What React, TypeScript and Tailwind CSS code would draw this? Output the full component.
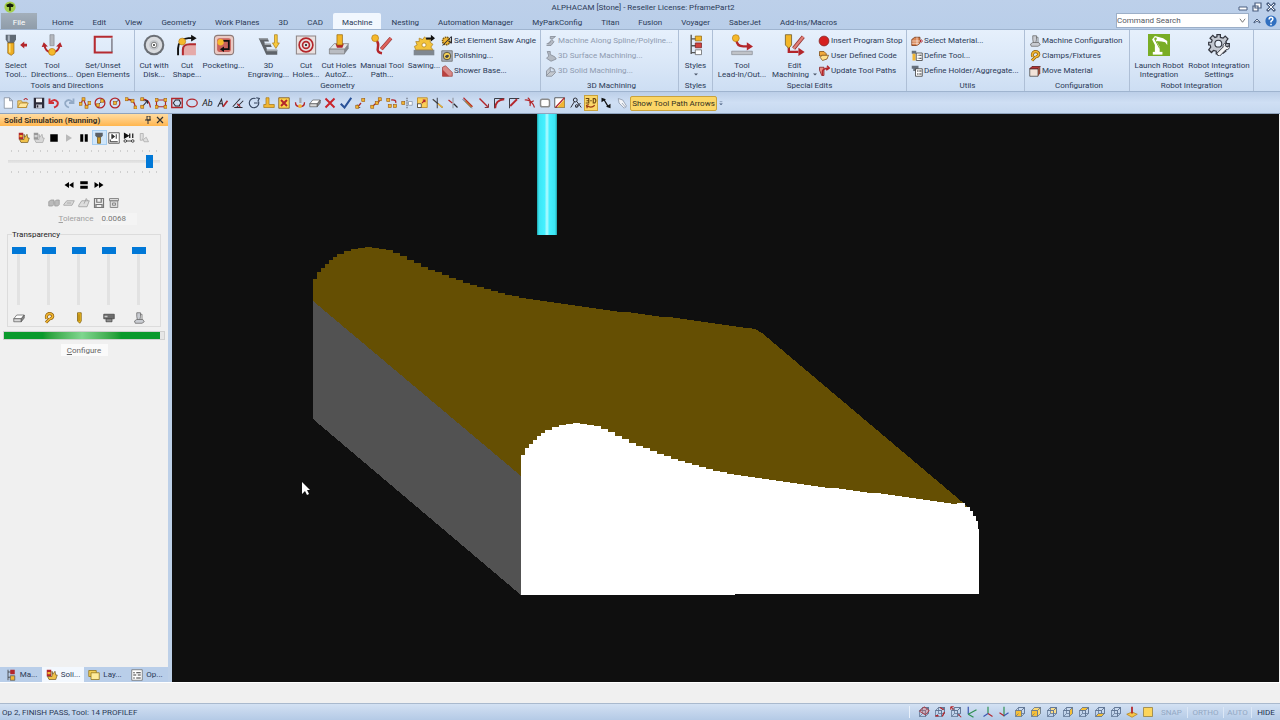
import type { ReactNode } from 'react';
import clsx from 'clsx';

const RED = '#b3262b';
const GOLD = '#f2b632';
const INK = '#2b2b33';

/* ---------- 16px glyphs ---------- */

const node = (x: number, y: number) => (
  <rect x={x - 2} y={y - 2} width="4" height="4" fill={GOLD} stroke="#9a5a10" strokeWidth=".8" />
);

const cube = (front = 'none', top = 'none', side = 'none', left = 'none') => (
  <g stroke="#5d7391" strokeWidth="1">
    <path d="M6 2h8v8H6z" fill={left} />
    <path d="M2 6l4-4h8l-4 4z" fill={top} />
    <path d="M10 6l4-4v8l-4 4z" fill={side} />
    <path d="M2 6h8v8H2z" fill={front} />
    <path d="M2 14l4-4" />
  </g>
);

const slab = (
  <g stroke="#555" strokeWidth=".9">
    <path d="M1 9l4-5h10l-4 5z" fill="#fff" />
    <path d="M1 9h10v4H1z" fill="#d8d8d8" />
    <path d="M11 9l4-5v4l-4 5z" fill="#888" />
  </g>
);

const machine = (
  <g stroke="#666" strokeWidth="1" fill="#c9ccd2">
    <path d="M5 1h5v5l-1 5H6L5 6z" />
    <path d="M2 12l3-2h8l2 3-3 2H3z" />
    <path d="M10 3h2v7" fill="none" />
  </g>
);

const clamp = (
  <g fill="none">
    <path d="M4 14l5-5M5 9q-2-5 3-7 5 0 5 4-1 3-4 3" stroke="#8c6012" strokeWidth="4" />
    <path d="M4 14l5-5M5 9q-2-5 3-7 5 0 5 4-1 3-4 3" stroke={GOLD} strokeWidth="2.2" />
  </g>
);

const simStart = (
  <g>
    <path d="M1 1h6v9H1z" fill={RED} />
    <path d="M2 4h4v3H2z" fill={GOLD} />
    <path d="M8 3l1 4 3-4 1 5h2l-2 6H4l-2-4h6z" fill="#f0c14a" stroke="#6b511b" strokeWidth=".9" />
  </g>
);

const glyphs: Record<string, ReactNode> = {
  new: <path d="M3 1h7l4 4v10H3zM10 1v4h4" fill="#fff" stroke="#7d8796" />,
  open: (
    <g stroke="#a8781a" strokeWidth=".9">
      <path d="M1 14V5h5l1 2h6v7z" fill="#f5d274" />
      <path d="M1 14l3-6h11l-3 6z" fill="#ffe69a" />
      <path d="M9 4q3-4 5 0" fill="none" stroke={RED} strokeWidth="1.5" />
    </g>
  ),
  save: (
    <g>
      <path d="M1 1h14v14H1z" fill="#2c2c3a" />
      <path d="M4 2h8v5H4z" fill="#f4f4f8" />
      <path d="M4 10h8v5H4z" fill="#c9cbd6" />
      <path d="M5 11h2v3H5z" fill="#2c2c3a" />
    </g>
  ),
  undo: <path d="M2 2v6h6M3 7q6-6 10 0 1 5-5 7" fill="none" stroke="#cf3036" strokeWidth="2.6" />,
  redo: <path d="M14 2v6H8M13 7q-6-6-10 0-1 5 5 7" fill="none" stroke="#93aac6" strokeWidth="2.4" />,
  polyline: (
    <g>
      <path d="M2 9l4-6 4 10 4-5" fill="none" stroke={RED} strokeWidth="1.6" />
      {node(2, 9)}{node(6, 3)}{node(10, 13)}{node(14, 8)}
    </g>
  ),
  circleDiag: (
    <g>
      <circle cx="8" cy="8" r="6.5" fill="none" stroke={RED} strokeWidth="1.7" />
      <path d="M4 12l8-8" stroke={INK} />{node(11, 5)}{node(5, 11)}
    </g>
  ),
  circleCenter: (
    <g>
      <circle cx="8" cy="8" r="6.5" fill="none" stroke={RED} strokeWidth="1.7" />
      <path d="M8 8l5-4" stroke={INK} />{node(8, 8)}
    </g>
  ),
  arc: (
    <g>
      <path d="M2 3q11 0 12 11" fill="none" stroke={RED} strokeWidth="1.7" />
      {node(2, 3)}{node(10, 5)}{node(14, 14)}
    </g>
  ),
  arcArrow: (
    <g>
      <path d="M3 3q10 0 11 11" fill="none" stroke={RED} strokeWidth="1.7" />
      <path d="M2 14l8-9M6 5h4v4" fill="none" stroke={INK} strokeWidth="1.5" />{node(3, 13)}{node(3, 3)}
    </g>
  ),
  rect: (
    <g>
      <path d="M2 4h12v9H2z" fill="none" stroke={RED} strokeWidth="1.6" />
      {node(2, 4)}{node(14, 4)}{node(2, 13)}{node(14, 13)}
    </g>
  ),
  rectCircle: (
    <g fill="none">
      <path d="M1 2h14v12H1z" stroke={RED} strokeWidth="1.8" />
      <path d="M3 8l3-4h5l2 4-2 4H6z" stroke={INK} strokeWidth="1.4" />
    </g>
  ),
  ellipse: <ellipse cx="8" cy="8" rx="7" ry="5.2" fill="none" stroke={RED} strokeWidth="1.7" />,
  textEdit: (
    <g fill="none">
      <path d="M1 13l5-10 2 10M3 9h4" stroke={INK} strokeWidth="1.4" />
      <path d="M8 13l6-8" stroke={RED} strokeWidth="2.2" />
    </g>
  ),
  parallel: (
    <g fill="none">
      <path d="M1 13L11 2M6 14l9-9M3 14h11" stroke={INK} strokeWidth="1.4" />
      <path d="M7 9l4 4" stroke={RED} strokeWidth="1.8" />
    </g>
  ),
  circleArrow: (
    <g fill="none" stroke="#34435c" strokeWidth="1.5">
      <path d="M14 6a6.3 6.3 0 1 1-4-4" />
      <path d="M8 8h5M11 1l4 1-2 4" />
    </g>
  ),
  ruler: <path d="M4 1h4v9h7v4H1v-4h3z" fill={GOLD} stroke="#a87b1c" />,
  boxX: (
    <g>
      <path d="M1 1h14v14H1z" fill="#fcd44b" stroke="#7a4c10" />
      <path d="M4 4l8 8M12 4l-8 8" stroke={RED} strokeWidth="2.6" />
    </g>
  ),
  directions: (
    <g>
      <path d="M7 1h3v7H7z" fill="#a5a8b0" />
      <path d="M2 7q0 6 6 6t6-6" fill="none" stroke={RED} strokeWidth="1.8" />
      <circle cx="8" cy="12" r="2.5" fill={GOLD} />
    </g>
  ),
  slab,
  cross: <path d="M2 2l12 12M14 2L2 14" stroke="#c9242b" strokeWidth="2.6" />,
  tick: <path d="M1 9l5 5 9-13" fill="none" stroke="#2a5298" strokeWidth="2.8" />,
  moveNode: (
    <g>
      <path d="M3 14l5-6" stroke={RED} strokeWidth="1.7" />
      <path d="M3 10v4h4" fill="none" stroke={INK} />{node(11, 4)}{node(3, 13)}
    </g>
  ),
  stretch: (
    <g>
      <path d="M2 14l5-5h3l4-6" fill="none" stroke={RED} strokeWidth="1.6" />
      {node(3, 13)}{node(9, 8)}{node(13, 3)}
    </g>
  ),
  copy: (
    <g>
      <path d="M7 4q7-1 6 4" fill="none" stroke={RED} strokeWidth="1.7" />
      {node(3, 4)}{node(5, 12)}{node(12, 12)}
    </g>
  ),
  mirror: (
    <g>
      <path d="M8 1v14" stroke={INK} strokeDasharray="2 1" />
      <path d="M10 6h5v5h-5z" fill="#fff" stroke="#8292a8" />{node(3, 8)}
    </g>
  ),
  scale: (
    <g>
      <path d="M2 1h13v13H2z" fill="#fbd057" stroke="#b5801b" />
      <path d="M2 9h5v5H2z" fill="#fff" stroke="#333" />
      <path d="M8 8l4-4M9 4h3v3" fill="none" stroke={RED} strokeWidth="1.5" />
    </g>
  ),
  trim: (
    <g>
      <path d="M1 3l13 11" stroke="#444" strokeWidth="1.7" />
      <path d="M7 1v14" stroke={INK} strokeWidth="1.2" />
      <path d="M8 9l6 5" stroke={GOLD} strokeWidth="2" />
    </g>
  ),
  breakLine: (
    <g>
      <path d="M8 1v14" stroke="#777" />
      <path d="M2 4l5 4" stroke={RED} strokeWidth="1.6" />
      <path d="M9 9l5 5" stroke={INK} strokeWidth="1.6" />
    </g>
  ),
  extend: (
    <g>
      <path d="M5 5l8 8" stroke={GOLD} strokeWidth="3" />
      <path d="M2 1l12 12" stroke={RED} strokeWidth="1.5" />
      <path d="M1 3l12 12" stroke={INK} />
    </g>
  ),
  join: (
    <g>
      <path d="M2 2l11 11" stroke={RED} strokeWidth="1.8" />
      <path d="M14 9v5H9" fill="none" stroke="#7d2428" strokeWidth="1.2" />
    </g>
  ),
  fillet: (
    <g fill="none">
      <path d="M2 15V2h13" stroke={INK} strokeWidth="1.2" />
      <path d="M3 15Q3 4 15 3" stroke={RED} strokeWidth="2.4" />
    </g>
  ),
  chamfer: (
    <g fill="none">
      <path d="M2 15V2h13" stroke={INK} strokeWidth="1.2" />
      <path d="M3 12l9-9" stroke={RED} strokeWidth="2.4" />
    </g>
  ),
  arcs: <path d="M1 4q9-1 13 10M5 1q5 3 3 11M7 8l6-3" fill="none" stroke={RED} strokeWidth="1.6" />,
  pocket: <rect x="2" y="3" width="12" height="10" rx="2.5" fill="#fff" stroke="#8b8b8b" strokeWidth="2" />,
  split: (
    <g>
      <path d="M1 1h13v13H1z" fill="#fff" stroke="#333" />
      <path d="M14 3v11H4z" fill={GOLD} />
      <path d="M2 14L14 1" stroke={RED} strokeWidth="1.6" />
    </g>
  ),
  inspect: (
    <g fill="none" stroke={INK} strokeWidth="1.3">
      <circle cx="7" cy="4" r="2.6" />
      <path d="M1 14l5-8M9 6l6 8M14 8l-6 6" />
      <circle cx="9" cy="12" r="1.8" />
    </g>
  ),
  threeD: (
    <g fill="none" stroke="#6c4710" strokeWidth="1.5">
      <path d="M1 2h4v6H1M2 5h3M7 5h2M11 2h2q3 3 0 6h-2z" />
      <path d="M2 11q6 5 11 0M5 10l-3 1 1 4" stroke="#9c3a12" />
    </g>
  ),
  arrows: (
    <g fill="#111">
      <path d="M5 3l6 10" stroke="#111" strokeWidth="1.8" />
      <path d="M2 7V1l6 2zM14 9v6l-6-2z" />
    </g>
  ),
  pen: <path d="M3 2l6 2 5 8-3 3-7-7zM8 8l5 6" fill="#f2f4f8" stroke="#8793a5" />,

  // ribbon, small rows
  sawAngle: (
    <g>
      <circle cx="7" cy="8" r="5" fill={GOLD} stroke="#7b5b13" strokeDasharray="2 1" strokeWidth="2" />
      <path d="M2 14L14 2M14 2v9M10 8l4 3" stroke={INK} strokeWidth="1.4" fill="none" />
    </g>
  ),
  polishing: (
    <g>
      <path d="M1 1h14v14H1z" fill="#aab0ba" stroke="#666" />
      <circle cx="8" cy="8" r="5" fill="#f6d257" stroke="#333" />
      <path d="M5 9q3-5 6-1l-3 3z" fill="#444" />
    </g>
  ),
  shower: (
    <g>
      <path d="M2 15V3l4-2 9 9v5z" fill="#d98a88" stroke="#98403f" />
      <path d="M2 15V6l9 9z" fill="#b9403f" />
    </g>
  ),
  spline: <path d="M2 14h6l4-5-3-3 5-4H7v3h3M2 12q5 0 6-5" fill="#b4bac3" stroke="#7f8691" />,
  surface: <path d="M3 2h4v4l6 3 2 3-7 3-6-4 3-3z" fill="#b4bac3" stroke="#7f8691" />,
  solid: <path d="M2 8l5-5 5 2 2 5-5 5H2zM7 3v6h6M7 9l-5 5" fill="#c4c9d0" stroke="#7f8691" />,
  stop: <circle cx="8" cy="8" r="6.5" fill="#d6201f" stroke="#8b2a2a" strokeWidth="1.2" />,
  userCode: (
    <g stroke="#7b4a12">
      <path d="M2 2h6l3 3v3H2z" fill="#f0a93c" />
      <path d="M5 7h9l-2 5-6 2-3-4z" fill="#ffe08a" />
    </g>
  ),
  update: (
    <g>
      <path d="M2 3h6v11H5L2 7z" fill="#e88c85" stroke="#7c1d20" />
      <path d="M6 14V9q0-4 8-5M12 1l3 3-4 3" stroke={RED} strokeWidth="2" fill="none" />
    </g>
  ),
  material: (
    <g>
      <path d="M1 6l4-3h7v8l-4 3H1z" fill="#d98453" stroke="#71310f" />
      <path d="M1 8h11M1 11h10M8 3v11" stroke="#fff" strokeWidth=".8" />
      <path d="M12 8h4M12 8l2-2M12 8l2 2" stroke={RED} strokeWidth="1.3" />
    </g>
  ),
  defTool: (
    <g>
      <path d="M1 1h6v4H1z" fill="#66707d" />
      <path d="M2 5h4v9H2z" fill={GOLD} />
      <path d="M7 4h8v10H7z" fill="#fff" stroke="#333" />
      <path d="M9 7h1M11 7h3M9 11h1M11 11h3" stroke="#333" strokeWidth="1.4" />
    </g>
  ),
  defHolder: (
    <g>
      <path d="M1 1h9v4H8v3H3V5H1z" fill="#66707d" />
      <path d="M6 5h9v10H6z" fill="#fff" stroke="#333" />
      <path d="M8 8h2M11 8h3M8 12h2M11 12h3" stroke="#333" strokeWidth="1.4" />
    </g>
  ),
  machine,
  clamp,
  moveMaterial: (
    <g>
      <path d="M1 5h11v10H1z" fill="#f2e3d9" stroke="#444" />
      <path d="M1 5l3-3h11l-3 3z" fill="#b83535" stroke="#571717" />
      <path d="M12 5l3-3v9l-3 4z" fill="#8d4a3a" />
    </g>
  ),

  // solid simulation panel
  simStart,
  simGrey: <g className="opacity-50 grayscale">{simStart}</g>,
  stopSq: <path d="M3 3h10v10H3z" fill="#000" />,
  play: <path d="M4 3l8 5-8 5z" fill="#b9b9b9" />,
  pause: <path d="M3 3h4v10H3zM9 3h4v10H9z" fill="#000" />,
  simTool: (
    <g>
      <path d="M3 1h10v4l-2 2H5L3 5z" fill="#5a6068" />
      <path d="M6 7h4v8H6z" fill="#cf9b28" stroke="#71551a" />
    </g>
  ),
  playBox: (
    <g fill="none" stroke="#333">
      <path d="M1 1h14v14H1z" fill="#fff" />
      <path d="M5 3l4 3-4 3z" fill="#333" />
      <path d="M11 3v6M3 10v3h10" strokeWidth="1.3" />
    </g>
  ),
  playSteps: (
    <g fill="#111" stroke="#111">
      <path d="M2 2l5 3-5 3zM9 2v6M13 2v6" strokeWidth="1.6" />
      <path d="M4 12h8" />
      <circle cx="3" cy="12" r="1.7" fill="#fff" />
      <circle cx="13" cy="12" r="1.7" fill="#fff" />
    </g>
  ),
  greyMachine: <path d="M3 2h4v5l-1 4H3zM7 10l4-3 3 6H8z" fill="#e0e0e0" stroke="#aaa" />,
  rewind: <path d="M8 4v8L2 8zM14 4v8L8 8z" fill="#000" />,
  equals: <path d="M3 3h10v4H3zM3 9h10v4H3z" fill="#000" />,
  forward: <path d="M2 4v8l6-4zM8 4v8l6-4z" fill="#000" />,
  parts: <path d="M1 6l3-2h4v6l-2 2H1zM9 6l2-2h4v6l-2 2H9z" fill="#bbb" stroke="#999" />,
  part: <path d="M1 10l4-5h10l-3 6H1zM5 8h6" fill="#ddd" stroke="#999" />,
  partUp: <path d="M1 11l4-6h10l-3 8H1zM8 9l3-7 2 3" fill="#ddd" stroke="#999" />,
  greySave: <path d="M2 2h12v12H2zM5 2v5h6V2M4 14v-4h8v4" fill="#eee" stroke="#777" strokeWidth="1.6" />,
  greyBox: <path d="M2 2h12v3H2zM3 5h10v9H3zM6 8h4v3H6z" fill="#ddd" stroke="#888" strokeWidth="1.3" />,
  cutter: <path d="M6 1h5v11l-2 3-3-3zM8 3v9" fill="#f0b91f" stroke="#7b5b0c" />,
  holder: (
    <g stroke="#444">
      <path d="M1 3h14v6H1z" fill="#6d6d6d" />
      <path d="M2 5h4v2H2z" fill="#ccc" stroke="none" />
      <path d="M4 9h8v4H4z" fill="#8c8c8c" />
    </g>
  ),

  // pane tabs
  manager: (
    <g>
      <path d="M4 1v14M4 4h5M4 11h5" stroke="#333" fill="none" />
      <path d="M7 1h6v6H7z" fill={RED} />
      <path d="M7 9h6v6H7z" fill={GOLD} stroke="#555" />
    </g>
  ),
  layers: (
    <g stroke="#8f7216">
      <path d="M1 2h10v8H1z" fill="#f4cf56" />
      <path d="M4 5h11v9H4z" fill="#ffec9c" />
    </g>
  ),
  ops: (
    <g>
      <path d="M1 1h14v14H1z" fill="#fff" stroke="#666" />
      <path d="M3 5h2M7 5h6M3 8h4M9 8h4M3 12h2M7 12h6" stroke="#333" strokeWidth="1.3" />
    </g>
  ),

  // status bar views
  viewBall: <g>{cube()}<path d="M2 7l6-6 7 5-5 6z" fill="#cf6f74" fillOpacity=".4" stroke={RED} /></g>,
  viewSpin: <g>{cube()}<path d="M8 2l5 3M14 8l-3 6M2 13h4" stroke={RED} strokeWidth="1.8" /></g>,
  viewCorner: <g>{cube()}<path d="M1 1l4 4M1 1v4M1 1h4M15 15l-4-4" stroke={RED} strokeWidth="1.4" /></g>,
  axisA: (
    <g fill="none" strokeWidth="1.6">
      <path d="M3 1v10" stroke="#3a56b0" /><path d="M3 11l11-6" stroke="#2f8f52" /><path d="M3 11l7 4" stroke="#2f8f52" />
    </g>
  ),
  axisB: (
    <g fill="none" strokeWidth="1.6">
      <path d="M8 1v9" stroke="#2f8f52" /><path d="M8 10l-6 4" stroke="#3a56b0" /><path d="M8 10l6 4" stroke={RED} />
    </g>
  ),
  axisC: (
    <g fill="none" strokeWidth="1.6">
      <path d="M8 1v13" stroke="#2f8f52" /><path d="M8 13l-6-4" stroke={RED} /><path d="M8 13l6-4" stroke="#3a56b0" />
    </g>
  ),
  vFront: cube('#f6bf36'),
  vTop: cube('#f6bf36', '#fbd873', '#fbd873'),
  vLeft: cube('none', 'none', 'none', '#f9dc8a'),
  vRight: cube('none', 'none', '#f6bf36'),
  vBack: cube('none', '#f6bf36'),
  vBottom: <g>{cube()}<path d="M2 14l4-4h8l-4 4z" fill="#f6bf36" stroke="#5d7391" /></g>,
  vWire: cube(),
  workPlane: (
    <g>
      <path d="M1 11l7-3 7 3-7 4z" fill="#f6c64a" stroke="#b38119" />
      <path d="M8 1v9" stroke={RED} strokeWidth="2.4" />
    </g>
  ),
  flat: <path d="M2 2h12v12H2z" fill="#fcd55c" stroke="#8f7a3a" />,
};

function Glyph({ name, className = 'size-3' }: { name: string; className?: string }) {
  return (
    <svg viewBox="0 0 16 16" className={clsx('shrink-0', className)} aria-hidden="true">
      {glyphs[name]}
    </svg>
  );
}

/* ---------- 32px ribbon art ---------- */

const pictures: Record<string, ReactNode> = {
  selectTool: (
    <g>
      <path d="M1 1h15v7l-3 5H4L1 8z" fill="#5f6974" />
      <path d="M4 2h3v9H4z" fill="#a9b2bd" />
      <path d="M4 13h9v15l-4 3-5-3z" fill="#efae22" stroke="#8f6414" />
      <path d="M6 14h2v13H6z" fill="#ffe27c" />
      <path d="M22 16l6-5v3h4v4h-4v3z" fill="#b3262b" />
    </g>
  ),
  toolDirections: (
    <g>
      <path d="M13 1h6v16h-6z" fill="#b4b7bd" stroke="#868a93" />
      <path d="M5 16q1 10 11 11 10-1 11-11" fill="none" stroke={RED} strokeWidth="3" />
      <path d="M1 19l3-7 6 6zM31 19l-3-7-6 6z" fill={RED} />
      <circle cx="16" cy="26" r="5" fill="#f5b92c" stroke="#b57b14" />
    </g>
  ),
  openElements: (
    <g fill="none">
      <path d="M30 4H4v23h26" stroke="#b52b31" strokeWidth="3" />
      <path d="M29 6v20" stroke="#5c5560" strokeWidth="1.6" />
    </g>
  ),
  disk: (
    <g>
      <circle cx="16" cy="16" r="15" fill="#6b6f75" />
      <circle cx="16" cy="16" r="12" fill="#d9dbde" />
      <circle cx="16" cy="16" r="7" fill="#c0c3c8" />
      <circle cx="16" cy="16" r="4" fill="#fff" stroke="#555" />
      <circle cx="16" cy="16" r="1.5" fill="#333" />
    </g>
  ),
  cutShape: (
    <g fill="none">
      <path d="M11 31v-7q0-8 9-8h9v15z" fill="#e5aaa9" />
      <path d="M10 31v-8q0-8 10-8h9" stroke="#b22a2e" strokeWidth="3" />
      <path d="M3 31V21Q4 7 18 6h6" stroke="#111" strokeWidth="2.8" />
      <path d="M22 1l8 5-8 5z" fill="#111" />
      <circle cx="9" cy="11" r="5" fill="#f5b92c" stroke="#b57b14" />
    </g>
  ),
  pocketing: (
    <g>
      <rect x="2" y="2" width="28" height="28" rx="5" fill="#e9c9c3" stroke="#8e7b78" strokeWidth="1.5" />
      <rect x="6" y="6" width="20" height="20" rx="3" fill="#c9625b" />
      <path d="M14 10h9v12h-8" fill="none" stroke="#111" strokeWidth="2.6" />
      <path d="M16 18v8l-6-4z" fill="#111" />
      <circle cx="11" cy="12" r="4.6" fill="#f5b92c" />
    </g>
  ),
  engraving: (
    <g>
      <path d="M1 6h13l2 5H9l1 3h8l2 5h-8l1 4h15v7H12z" fill="#5e6369" />
      <path d="M1 6h13l1 2H3zM9 14h9l1 2h-9zM12 23h16v2H13z" fill="#a3a8ad" />
      <path d="M24 1h4v12h3l-5 8-5-8h3z" fill="#f7c93c" stroke="#a97b16" />
    </g>
  ),
  cutHoles: (
    <g fill="none">
      <path d="M2 3h28v26H2z" fill="#e9e0df" stroke="#8d8485" strokeWidth="1.5" />
      <circle cx="16" cy="16" r="10" stroke="#b3262b" strokeWidth="2.4" />
      <circle cx="16" cy="16" r="5" stroke="#b3262b" strokeWidth="2.4" />
      <circle cx="16" cy="16" r="1.5" fill="#111" />
    </g>
  ),
  autoZ: (
    <g>
      <path d="M2 22l7-8h21l-6 8z" fill="#e4e6e9" stroke="#777" />
      <path d="M2 22h22v7H2z" fill="#b9bcc2" stroke="#777" />
      <path d="M24 22l6-8v7l-6 8z" fill="#82868d" />
      <path d="M11 14h12l-2 6h-8z" fill={RED} />
      <path d="M13 1h8v15h-8z" fill="#f3b627" stroke="#93670f" />
    </g>
  ),
  manualPath: (
    <g fill="none">
      <path d="M6 6q6 7 4 14t6 8" stroke={RED} strokeWidth="3.6" />
      <path d="M15 22L29 6" stroke="#8f2d2e" strokeWidth="5.4" />
      <path d="M15 22L29 6" stroke="#dd625c" strokeWidth="3.4" />
      <circle cx="6" cy="6" r="5" fill="#f5b92c" stroke="#b57b14" />
    </g>
  ),
  sawing: (
    <g>
      <path d="M1 23h30v8H1z" fill="#7f8790" />
      <path d="M4 23l-2-5 4-2-2-5 5 0 0-5 5 2 3-4 3 4 5-1v5l4 3-3 4 3 4z" fill="#f3c33b" stroke="#a77b18" />
      <circle cx="16" cy="16" r="3" fill="#fff" stroke="#a77b18" />
      <path d="M19 5h7V1l6 5-6 5V8h-7z" fill="#111" />
    </g>
  ),
  styles: (
    <g>
      <path d="M9 1v28M9 7h8M9 17h8M9 27h8" fill="none" stroke="#555" strokeWidth="2" />
      <path d="M15 3h9v7h-9z" fill="#f3b627" stroke="#8b6312" />
      <path d="M15 13h9v7h-9z" fill="#d0413d" stroke="#711c1d" />
      <path d="M15 23h9v7h-9z" fill="#fff" stroke="#555" />
    </g>
  ),
  leadIn: (
    <g>
      <path d="M1 25h30v5H1z" fill="#c0c3c8" stroke="#868a91" />
      <path d="M8 8q0 10 10 10h6" fill="none" stroke={RED} strokeWidth="3.4" />
      <path d="M23 12l9 6-9 6z" fill={RED} />
      <circle cx="7" cy="6" r="5" fill="#f5b92c" stroke="#b57b14" />
    </g>
  ),
  editMachining: (
    <g fill="none">
      <path d="M7 14v12h14" stroke={RED} strokeWidth="3.4" />
      <path d="M21 20l9 6-9 6z" fill={RED} />
      <path d="M14 21L28 4" stroke="#8f2d2e" strokeWidth="5.6" />
      <path d="M14 21L28 4" stroke="#e08078" strokeWidth="3.4" />
      <path d="M2 1h9v15l-4 5-5-5z" fill="#f3b627" stroke="#5d4a1a" />
    </g>
  ),
  robot: (
    <g>
      <path d="M0 0h32v32H0z" fill="#79ad25" />
      <path d="M7 26h14v4H7z" fill="#fff" />
      <path d="M10 26V16L6 8l4-5 12 3 6 4v6l-3-4-5-1-8-1 5 9v7z" fill="#fff" />
      <path d="M10 8l7 13" stroke="#79ad25" strokeWidth="1.4" />
      <circle cx="11" cy="7" r="1.8" fill="#79ad25" />
    </g>
  ),
  robotSettings: (
    <g>
      <path
        d="M13 1h5v4l4 1 3-3 4 4-3 4 1 3h4v4h-5l-2 4 2 3-4 3-3-3-2 1v3h-5v-4l-4-1-3 3-4-4 3-4-1-3H1v-4h4l1-3-3-3 4-4 3 3 3-1z"
        fill="#c3c8d1" stroke="#33363f" strokeWidth="1.8" />
      <circle cx="15" cy="14" r="5" fill="#eaf2fc" stroke="#33363f" strokeWidth="1.6" />
      <path d="M13 28l9-9q-1-5 4-6l-1 4 3 2 3-2q1 6-5 6l-9 9q-4 0-4-4z" fill="#f3f4f6" stroke="#33363f" strokeWidth="1.4" />
    </g>
  ),
};

/* ---------- ribbon ---------- */

type BigProps = { picture: string; lines: string[]; width: string; menu?: boolean };

function BigButton({ picture, lines, width, menu }: BigProps) {
  return (
    <button className={clsx('flex flex-col items-center pt-1 shrink-0', width)}>
      <svg viewBox="0 0 32 32" className="size-[22px] mb-[5px]" aria-hidden="true">
        {pictures[picture]}
      </svg>
      {lines.map((line, i) => (
        <span key={line} className="flex items-center gap-1">
          {line}
          {menu && i === lines.length - 1 && <Caret />}
        </span>
      ))}
    </button>
  );
}

function Caret() {
  return (
    <svg viewBox="0 0 8 4" className="w-1 h-[9px]" aria-hidden="true">
      <path d="M0 0h8L4 4z" fill="#4a5568" />
    </svg>
  );
}

function RowButtons({ rows, disabled }: { rows: [string, string][]; disabled?: boolean }) {
  return (
    <div className="flex flex-col pt-[3px]">
      {rows.map(([icon, label]) => (
        <button
          key={label}
          disabled={disabled}
          className="flex items-center gap-px h-[15px] text-left disabled:text-[#8f9bb0]"
        >
          <Glyph name={icon} />
          {label}
        </button>
      ))}
    </div>
  );
}

function Group({ title, width, children }: { title: string; width: string; children: ReactNode }) {
  return (
    <section className={clsx('flex flex-col shrink-0 border-r border-[#aebfd6]', width)}>
      <div className="flex flex-1">{children}</div>
      <h2 className="h-2.5 text-center">{title}</h2>
    </section>
  );
}

function Ribbon() {
  return (
    <div className="flex h-[63px] border-y border-[#9fb4cf] bg-linear-to-b from-[#e6f0fc] via-[#dbe8f8] to-[#cddef3] leading-[9px] overflow-hidden">
      <Group title="Tools and Directions" width="w-[135px]">
        <BigButton picture="selectTool" lines={['Select', 'Tool...']} width="w-8" />
        <BigButton picture="toolDirections" lines={['Tool', 'Directions...']} width="w-10" />
        <BigButton picture="openElements" lines={['Set/Unset', 'Open Elements']} width="w-[62px]" />
      </Group>
      <Group title="Geometry" width="w-[406px]">
        <BigButton picture="disk" lines={['Cut with', 'Disk...']} width="w-[38px]" />
        <BigButton picture="cutShape" lines={['Cut', 'Shape...']} width="w-7" />
        <BigButton picture="pocketing" lines={['Pocketing...']} width="w-[45px]" />
        <BigButton picture="engraving" lines={['3D', 'Engraving...']} width="w-[45px]" />
        <BigButton picture="cutHoles" lines={['Cut', 'Holes...']} width="w-[30px]" />
        <BigButton picture="autoZ" lines={['Cut Holes', 'AutoZ...']} width="w-9" />
        <BigButton picture="manualPath" lines={['Manual Tool', 'Path...']} width="w-[50px]" />
        <BigButton picture="sawing" lines={['Sawing...']} width="w-[34px]" />
        <RowButtons
          rows={[['sawAngle', 'Set Element Saw Angle'], ['polishing', 'Polishing...'], ['shower', 'Shower Base...']]}
        />
      </Group>
      <Group title="3D Machining" width="w-[138px] pl-1">
        <RowButtons
          disabled
          rows={[['spline', 'Machine Along Spline/Polyline...'], ['surface', '3D Surface Machining...'], ['solid', '3D Solid Machining...']]}
        />
      </Group>
      <Group title="Styles" width="w-[34px]">
        <button className="flex flex-col items-center w-full pt-1">
          <svg viewBox="0 0 32 32" className="size-[22px] mb-[5px]" aria-hidden="true">
            {pictures.styles}
          </svg>
          Styles
          <Caret />
        </button>
      </Group>
      <Group title="Special Edits" width="w-[194px]">
        <BigButton picture="leadIn" lines={['Tool', 'Lead-In/Out...']} width="w-[58px]" />
        <BigButton picture="editMachining" lines={['Edit', 'Machining']} width="w-[47px]" menu />
        <RowButtons
          rows={[['stop', 'Insert Program Stop'], ['userCode', 'User Defined Code'], ['update', 'Update Tool Paths']]}
        />
      </Group>
      <Group title="Utils" width="w-[118px] pl-1">
        <RowButtons
          rows={[['material', 'Select Material...'], ['defTool', 'Define Tool...'], ['defHolder', 'Define Holder/Aggregate...']]}
        />
      </Group>
      <Group title="Configuration" width="w-[105px] pl-1">
        <RowButtons
          rows={[['machine', 'Machine Configuration'], ['clamp', 'Clamps/Fixtures'], ['moveMaterial', 'Move Material']]}
        />
      </Group>
      <Group title="Robot Integration" width="w-[124px]">
        <BigButton picture="robot" lines={['Launch Robot', 'Integration']} width="w-[58px]" />
        <BigButton picture="robotSettings" lines={['Robot Integration', 'Settings']} width="w-[62px]" />
      </Group>
    </div>
  );
}

/* ---------- window header ---------- */

const tabs = [
  'Home', 'Edit', 'View', 'Geometry', 'Work Planes', '3D', 'CAD', 'Machine', 'Nesting', 'Automation Manager',
  'MyParkConfig', 'Titan', 'Fusion', 'Voyager', 'SaberJet', 'Add-Ins/Macros',
];

function Header() {
  return (
    <header className="bg-linear-to-b from-[#bdd0ea] to-[#b9cee9]">
      <div className="grid grid-cols-[1fr_auto_1fr] items-center h-[13px] pl-1 pr-0.5">
        <svg viewBox="0 0 16 16" className="size-3" aria-hidden="true">
          <circle cx="8" cy="8" r="7.5" fill="#a5cf4c" />
          <path d="M3 5l5-2 5 2-1 3H9v5H7V8H4z" fill="#17200a" />
        </svg>
        <h1 className="pt-0.5 pl-1">ALPHACAM [Stone] - Reseller License: PframePart2</h1>
        <div className="flex justify-end gap-1 pr-0.5 text-[#4b5f80]">
          <button aria-label="Minimize">
            <svg viewBox="0 0 10 10" className="size-[10px]"><path d="M1 5h8v3H1z" fill="#fff" stroke="currentColor" /></svg>
          </button>
          <button aria-label="Restore">
            <svg viewBox="0 0 10 10" className="size-[10px]">
              <path d="M3 1h6v5H3zM1 4h5v5H1z" fill="#fff" stroke="currentColor" strokeWidth="1.2" />
            </svg>
          </button>
          <button aria-label="Close">
            <svg viewBox="0 0 10 10" className="size-[10px]">
              <path d="M1 1l8 8M9 1L1 9" stroke="currentColor" strokeWidth="3" />
              <path d="M2 2l6 6M8 2L2 8" stroke="#fff" />
            </svg>
          </button>
        </div>
      </div>
      <div className="flex items-start h-4">
        <nav className="flex flex-1 gap-px h-4">
          <button className="w-9 mr-[5px] ml-px pt-0.5 bg-linear-to-b from-[#a3afbb] to-[#8f9ca9] text-white">File</button>
          {tabs.map((tab) => (
            <button key={tab} className={clsx('px-[9px] pt-0.5', tab === 'Machine' && 'bg-[#f1f7fe] rounded-t-xs')}>
              {tab}
            </button>
          ))}
        </nav>
        <div className="flex items-center h-[15px] w-[133px] bg-white border border-[#9cafc8]">
          <input
            aria-label="Command Search"
            placeholder="Command Search"
            className="flex-1 min-w-0 placeholder:text-[#55585f] outline-none"
          />
          <button aria-label="Show commands" className="px-0.5">
            <svg viewBox="0 0 8 8" className="size-[7px]"><path d="M1 2l3 4 3-4" fill="none" stroke="#666" /></svg>
          </button>
        </div>
        <button aria-label="Collapse ribbon" className="h-4 px-1">
          <svg viewBox="0 0 8 8" className="size-2"><path d="M1 5l3-3 3 3v1L4 4 1 6z" fill="#fff" stroke="#4b5f80" /></svg>
        </button>
        <button aria-label="Help" className="h-4 pr-[3px]">
          <svg viewBox="0 0 16 16" className="size-3">
            <circle cx="8" cy="8" r="7.5" fill="#2f6fc0" />
            <path d="M5.500 6q0-3 2.500-3t2.500 2.400Q10.500 7 8 8.500V10M8 11.500v2" fill="none" stroke="#fff" strokeWidth="2" />
          </svg>
        </button>
      </div>
    </header>
  );
}

const quickIcons = [
  'new', 'open', 'save', 'undo', 'redo', 'polyline', 'circleDiag', 'circleCenter', 'arc', 'arcArrow', 'rect',
  'rectCircle', 'ellipse', 'text', 'textEdit', 'parallel', 'circleArrow', 'ruler', 'boxX', 'directions', 'slab',
  'cross', 'tick', 'moveNode', 'stretch', 'copy', 'mirror', 'scale', 'trim', 'breakLine', 'extend', 'join',
  'fillet', 'chamfer', 'arcs', 'pocket', 'split', 'inspect', 'threeD', 'arrows', 'pen',
];

function QuickBar() {
  return (
    <div className="flex items-center h-[22px] pt-px bg-linear-to-b from-[#bccfe8] via-[#cfdff4] to-[#c6d8ef] border-b border-[#8fa3bd]">
      <div className="flex justify-between w-[630px] px-0.5">
        {quickIcons.map((name) => (
          <button
            key={name}
            aria-label={name}
            className={clsx(
              'flex items-center justify-center w-3 h-[14px]',
              name === 'threeD' && 'bg-[#fbd667] outline outline-[#c9a23c]',
            )}
          >
            {name === 'text' ? <span className="italic text-[9px] text-[#222]">Ab</span> : <Glyph name={name} />}
          </button>
        ))}
      </div>
      <button className="h-[15px] w-[87px] bg-[#fbd667] border border-[#c9a23c] rounded-xs text-[#33301f]">
        Show Tool Path Arrows
      </button>
      <button aria-label="Customize toolbar" className="pl-0.5">
        <svg viewBox="0 0 6 8" className="w-1 h-2"><path d="M1 2h4M1 5h4L3 7z" fill="#5b6f8e" stroke="#5b6f8e" strokeWidth=".8" /></svg>
      </button>
    </div>
  );
}

/* ---------- simulation pane ---------- */

const transport = ['simStart', 'simGrey', 'stopSq', 'play', 'pause', 'simTool', 'playBox', 'playSteps', 'greyMachine'];
const transparency = [
  ['slab', 'Material'], ['clamp', 'Clamps'], ['cutter', 'Tool'], ['holder', 'Holder'], ['machine', 'Machine'],
];
const paneTabs = [['manager', 'Ma...'], ['simStart', 'Soli...'], ['layers', 'Lay...'], ['ops', 'Op...']];

function IconRow({ names, active, className }: { names: string[]; active?: string; className?: string }) {
  return (
    <div className={clsx('flex justify-center', className)}>
      {names.map((name) => (
        <button
          key={name}
          aria-label={name}
          className={clsx(
            'flex items-center justify-center w-[15px] h-[15px] border',
            name === active ? 'bg-[#cfe6fb] border-[#a5cdf0]' : 'border-transparent',
          )}
        >
          <Glyph name={name} />
        </button>
      ))}
    </div>
  );
}

function Ticks() {
  return (
    <div className="flex justify-between px-[3px]">
      {Array.from({ length: 21 }, (_, i) => (
        <span key={i} className="w-px h-0.5 bg-[#cfcfcf]" />
      ))}
    </div>
  );
}

function SimulationPane() {
  return (
    <aside className="flex flex-col w-[172px] shrink-0 border-r-4 border-[#bdd0e8] bg-[#f0f0f0]">
      <div className="flex items-center h-3 px-1 bg-linear-to-b from-[#ffdca0] to-[#ffb64d]">
        <h2 className="flex-1 font-bold text-[#3a3226]">Solid Simulation (Running)</h2>
        <button aria-label="Auto hide" className="mr-1">
          <svg viewBox="0 0 8 8" className="size-2"><path d="M3 0h3v4H3zM1 4h6M4 4v4" fill="none" stroke="#333" /></svg>
        </button>
        <button aria-label="Close pane">
          <svg viewBox="0 0 8 8" className="size-2"><path d="M1 1l6 6M7 1L1 7" stroke="#333" strokeWidth="1.2" /></svg>
        </button>
      </div>

      <div className="flex flex-col px-2 pt-1">
        <IconRow names={transport} active="simTool" className="mb-[5px]" />
        <Ticks />
        <input
          type="range"
          aria-label="Simulation speed"
          defaultValue={95}
          className="appearance-none w-full h-[13px] my-[3px] bg-[linear-gradient(transparent_5px,#dcdcdc_5px,#e6e6e6_8px,transparent_8px)] [&::-webkit-slider-thumb]:appearance-none [&::-webkit-slider-thumb]:w-[7px] [&::-webkit-slider-thumb]:h-[13px] [&::-webkit-slider-thumb]:bg-[#0078d7]"
        />
        <Ticks />
        <IconRow names={['rewind', 'equals', 'forward']} className="mt-1" />
        <IconRow names={['parts', 'part', 'partUp', 'greySave', 'greyBox']} className="mt-[3px]" />
        <label className="flex items-center justify-center h-[15px] mt-px pl-7 gap-2 text-[#a0a0a0]">
          <span><u>T</u>olerance</span>
          <input defaultValue="0.0068" disabled className="w-9 h-3 text-[#777] bg-[#f4f4f4]" />
        </label>
      </div>

      <fieldset className="mx-[7px] mt-1 border border-[#dcdcdc] min-w-0">
        <legend className="ml-1 leading-[9px] text-[#222]">Transparency</legend>
        <div className="flex justify-between mt-2 pl-1 pr-3.5">
          {transparency.map(([icon, label]) => (
            <label key={label} className="flex flex-col items-center">
              <input
                type="range"
                aria-label={label}
                defaultValue={0}
                className="appearance-none [writing-mode:vertical-lr] w-3.5 h-[58px] bg-[linear-gradient(90deg,transparent_5px,#e2e2e2_5px,#e2e2e2_8px,transparent_8px)] [&::-webkit-slider-thumb]:appearance-none [&::-webkit-slider-thumb]:w-3.5 [&::-webkit-slider-thumb]:h-[7px] [&::-webkit-slider-thumb]:bg-[#0078d7]"
              />
              <Glyph name={icon} className="size-3 mt-[7px] mb-0.5" />
            </label>
          ))}
        </div>
      </fieldset>

      <div role="progressbar" aria-label="Simulation progress" className="h-[9px] mx-[3px] mt-1 pr-1 bg-[#e6e6e6] border border-[#d0d0d0]">
        <div className="h-full bg-linear-to-r from-[#0a9a2c] from-25% via-[#7fd68f] to-[#0a9a2c] to-75%" />
      </div>
      <button className="self-center w-[47px] h-3 mt-1 bg-[#fafafa] text-[#666]">
        <u>C</u>onfigure
      </button>

      <nav className="flex mt-auto h-[15px] bg-[#b9cee9]">
        {paneTabs.map(([icon, label]) => (
          <button
            key={label}
            className={clsx(
              'flex items-center justify-center gap-[3px] flex-1',
              icon === 'simStart' && 'bg-[#f3f8fe]',
            )}
          >
            <Glyph name={icon} />
            {label}
          </button>
        ))}
      </nav>
    </aside>
  );
}

/* ---------- viewport ---------- */

// top edge of the front face, voxel steps are cut from it
const profile = [
  [521, 458], [525, 448], [532, 441], [537, 436], [542, 432], [549, 428], [556, 425], [566, 422], [577, 421],
  [588, 422], [601, 425], [608, 428], [615, 432], [629, 439], [643, 445], [664, 453], [680, 459], [701, 465],
  [722, 470], [744, 474], [783, 479], [832, 486], [882, 492], [921, 497], [957, 502],
];
const corner = [[957, 503], [965, 503], [965, 507], [970, 507], [970, 511], [973, 511], [973, 516], [976, 516], [976, 521], [978, 521], [978, 529], [979, 529], [979, 536]];

function heightAt(x: number) {
  const i = Math.max(1, profile.findIndex(([px]) => px >= x));
  const [x0, y0] = profile[i - 1];
  const [x1, y1] = profile[i];
  return Math.round(y0 + ((x - x0) / (x1 - x0)) * (y1 - y0));
}

function steps(dx: number, dy: number) {
  const pts: string[] = [];
  let x = 521;
  while (x < 957) {
    const next = Math.min(957, x + (x < 545 ? 4 : 7));
    const y = heightAt((x + next) / 2);
    pts.push(`${x + dx},${y + dy}`, `${next + dx},${y + dy}`);
    x = next;
  }
  return pts.join(' ');
}

function Viewport() {
  return (
    <main className="relative flex-1 min-w-0 mr-px bg-[#0f0f0f] overflow-hidden">
      <svg
        viewBox="172 114 1107 568"
        preserveAspectRatio="xMinYMin meet"
        shapeRendering="crispEdges"
        className="block w-full h-full"
        role="img"
        aria-label="Solid simulation of the part"
      >
        <defs>
          <linearGradient id="tool">
            <stop offset="0" stopColor="#1f9fa5" />
            <stop offset=".1" stopColor="#3be6f5" />
            <stop offset=".38" stopColor="#45f0ff" />
            <stop offset=".5" stopColor="#b5fbff" />
            <stop offset=".62" stopColor="#45f0ff" />
            <stop offset=".9" stopColor="#3be6f5" />
            <stop offset="1" stopColor="#1f9fa5" />
          </linearGradient>
        </defs>
        <rect x="537" y="110" width="20" height="125" fill="url(#tool)" />
        <polygon points={`313,302 ${steps(-208, -174)} 755,329 762,333 967,506 967,520 521,520 521,476`} fill="#654f03" />
        <polygon points="313,301 521,476 521,595 313,419" fill="#525252" />
        <polygon points={`521,595 ${steps(0, 2)} ${corner.join(' ')} 979,594 735,594 735,595`} fill="#fff" />
        <path d="M302 482v12l3-3 2 4 2-1-2-4h3z" fill="#fff" shapeRendering="auto" />
      </svg>
    </main>
  );
}

/* ---------- status bar ---------- */

const viewIcons = [
  'viewBall', 'viewSpin', 'viewCorner', 'axisA', 'axisB', 'axisC', 'vFront', 'vTop', 'vLeft', 'vRight', 'vBack',
  'vBottom', 'vWire', 'workPlane', 'flat',
];

function StatusBar() {
  return (
    <footer className="flex items-center h-[17px] pl-0.5 border-t border-[#a9b9cd] bg-linear-to-b from-[#d3e1f3] to-[#b4cae6]">
      <p className="flex-1">Op 2, FINISH PASS, Tool: 14 PROFILEF</p>
      <div className="flex border-l border-[#e9f1fb] pl-2 gap-1">
        {viewIcons.map((name) => (
          <button key={name} aria-label={name}>
            <Glyph name={name} />
          </button>
        ))}
      </div>
      <div className="flex pl-0.5 text-[#93a8c4]">
        <button className="w-8 border-r border-[#dbe7f6]">SNAP</button>
        <button className="w-9 border-r border-[#dbe7f6]">ORTHO</button>
        <button className="w-7 border-r border-[#dbe7f6]">AUTO</button>
        <button className="w-7 text-[#22314e]">HIDE</button>
      </div>
    </footer>
  );
}

export default function App() {
  return (
    <div className="flex flex-col h-screen overflow-hidden whitespace-nowrap font-['Roboto','Open_Sans',sans-serif] text-[8px] leading-[11px] text-[#2b3a57] bg-[#f0f0f0]">
      <Header />
      <Ribbon />
      <QuickBar />
      <div className="flex flex-1 min-h-0">
        <SimulationPane />
        <Viewport />
      </div>
      <div className="h-[21px] border-t border-white" />
      <StatusBar />
    </div>
  );
}
